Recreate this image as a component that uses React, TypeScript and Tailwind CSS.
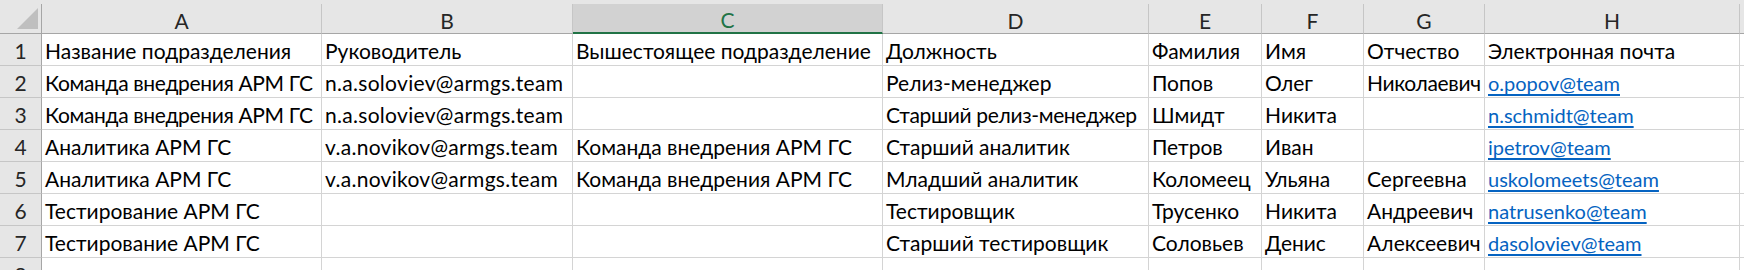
import React from "react";

const cols = [
  { key: "A", w: "w-[280px]" },
  { key: "B", w: "w-[251px]" },
  { key: "C", w: "w-[310px]" },
  { key: "D", w: "w-[266px]" },
  { key: "E", w: "w-[113px]" },
  { key: "F", w: "w-[102px]" },
  { key: "G", w: "w-[121px]" },
  { key: "H", w: "w-[255px]" },
];

const rows: string[][] = [
  ["Название подразделения", "Руководитель", "Вышестоящее подразделение", "Должность", "Фамилия", "Имя", "Отчество", "Электронная почта"],
  ["Команда внедрения АРМ ГС", "n.a.soloviev@armgs.team", "", "Релиз-менеджер", "Попов", "Олег", "Николаевич", "o.popov@team"],
  ["Команда внедрения АРМ ГС", "n.a.soloviev@armgs.team", "", "Старший релиз-менеджер", "Шмидт", "Никита", "", "n.schmidt@team"],
  ["Аналитика АРМ ГС", "v.a.novikov@armgs.team", "Команда внедрения АРМ ГС", "Старший аналитик", "Петров", "Иван", "", "ipetrov@team"],
  ["Аналитика АРМ ГС", "v.a.novikov@armgs.team", "Команда внедрения АРМ ГС", "Младший аналитик", "Коломеец", "Ульяна", "Сергеевна", "uskolomeets@team"],
  ["Тестирование АРМ ГС", "", "", "Тестировщик", "Трусенко", "Никита", "Андреевич", "natrusenko@team"],
  ["Тестирование АРМ ГС", "", "", "Старший тестировщик", "Соловьев", "Денис", "Алексеевич", "dasoloviev@team"],
  ["", "", "", "", "", "", "", ""],
];

const tight = new Set(["Команда внедрения АРМ ГС", "Старший релиз-менеджер", "Николаевич"]);

export default function App() {
  return (
    <div className="w-[1744px] h-[270px] overflow-hidden bg-white text-[21px] text-black font-['Lato','Noto_Sans',sans-serif]">
      <div className="h-[4px] bg-[#e6e6e6]" />
      {/* column header row */}
      <div className="flex h-[30px] bg-[#e6e6e6]">
        <div className="relative w-[42px] shrink-0 border-r border-b border-r-[#a6a6a6] border-b-[#a6a6a6]">
          <svg className="absolute left-[17px] top-[4px]" width="21" height="21" viewBox="0 0 21 21">
            <polygon points="21,0 21,21 0,21" fill="#bfbfbf" />
          </svg>
        </div>
        {cols.map((c) =>
          c.key === "C" ? (
            <div
              key={c.key}
              className={`${c.w} shrink-0 overflow-hidden border-r border-r-[#c6c6c6] border-b-2 border-b-[#217346] bg-[#d2d2d2] text-center leading-[32px] text-[#217346]`}
            >
              {c.key}
            </div>
          ) : (
            <div
              key={c.key}
              className={`${c.w} shrink-0 overflow-hidden border-r border-r-[#c6c6c6] border-b border-b-[#a6a6a6] text-center leading-[33px] text-[#262626]`}
            >
              {c.key}
            </div>
          )
        )}
        <div className="flex-1 border-b border-b-[#a6a6a6]" />
      </div>
      {rows.map((r, i) => (
        <div key={i} className="flex h-[32px]">
          <div className="w-[42px] shrink-0 overflow-hidden bg-[#e6e6e6] border-r border-b border-r-[#a6a6a6] border-b-[#c6c6c6] text-center leading-[33px] text-[#262626]">
            {i + 1}
          </div>
          {cols.map((c, j) => {
            const v = r[j];
            const isLink = j === 7 && i > 0 && v;
            const isLatin = j === 1 && i > 0;
            return (
              <div
                key={c.key}
                className={`${c.w} shrink-0 border-r border-b border-[#d4d4d4] pl-[3px] leading-[33px] whitespace-nowrap overflow-hidden`}
              >
                {isLink ? (
                  <span className="text-[20px] text-[#0563c1] underline underline-offset-[3px]">{v}</span>
                ) : isLatin ? (
                  <span className="tracking-[0.3px]">{v}</span>
                ) : tight.has(v) && j !== 2 ? (
                  <span className="tracking-[-0.35px]">{v}</span>
                ) : (
                  v
                )}
              </div>
            );
          })}
          <div className="flex-1 border-b border-[#d4d4d4]" />
        </div>
      ))}
    </div>
  );
}
